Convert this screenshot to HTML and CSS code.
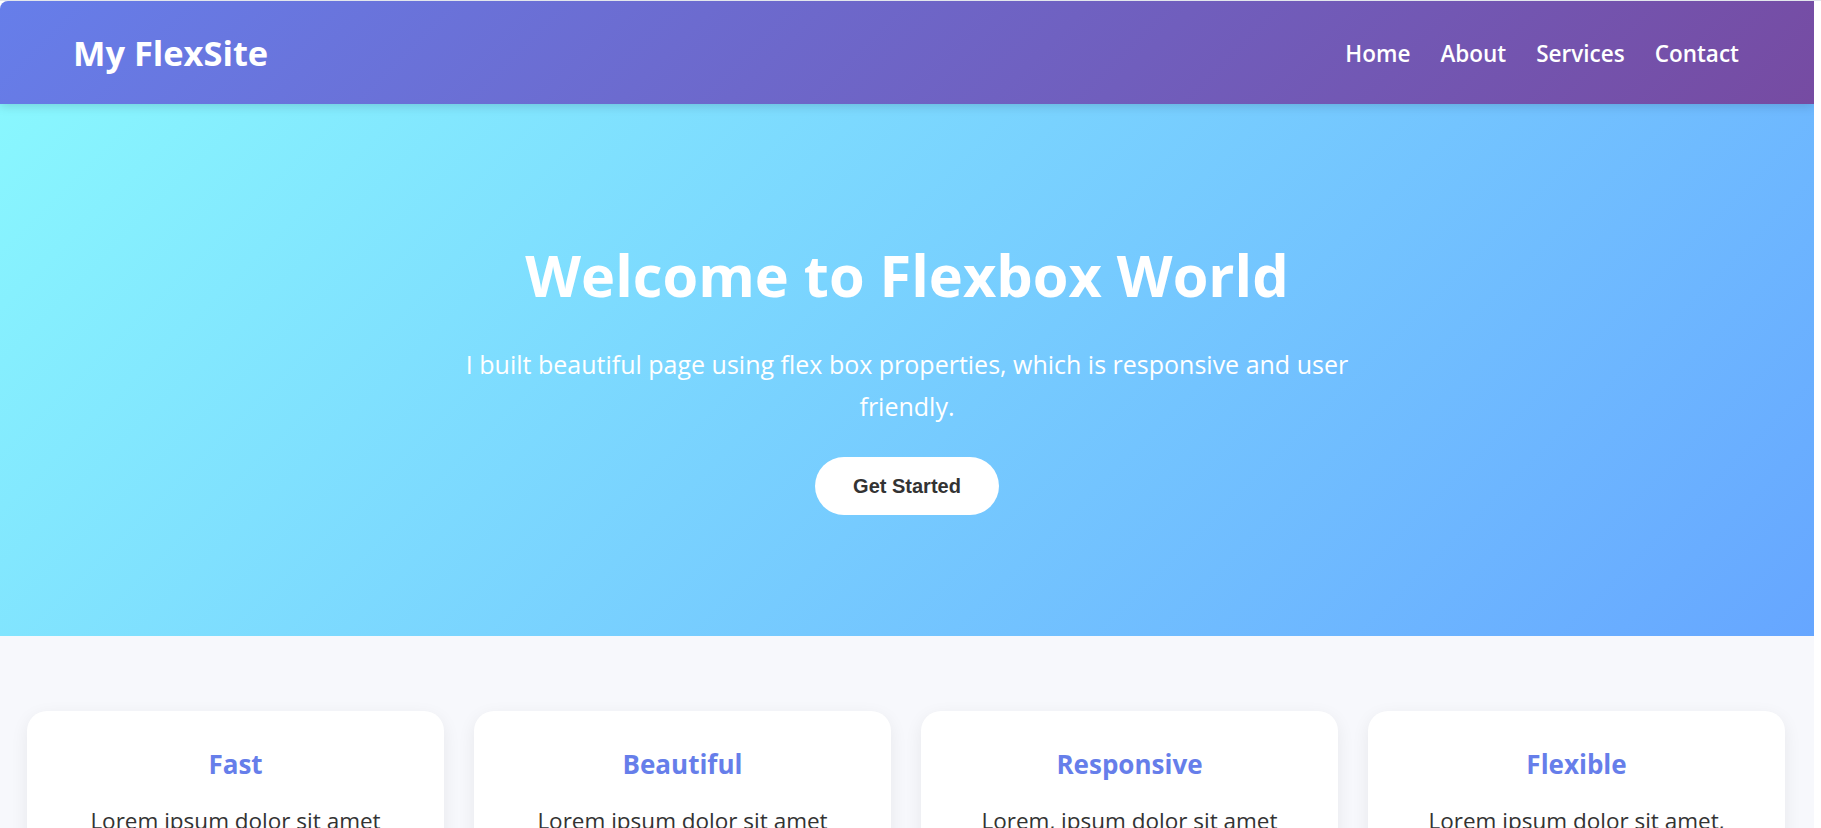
FILE: index.html
```html
<!DOCTYPE html>
<html lang="en">
<head>
<meta charset="utf-8">
<title>My FlexSite</title>
<link rel="stylesheet" href="styles.css">
</head>
<body>
<div class="page">
  <header class="site-header">
    <div class="logo">My FlexSite</div>
    <nav class="nav">
      <a href="#">Home</a>
      <a href="#">About</a>
      <a href="#">Services</a>
      <a href="#">Contact</a>
    </nav>
  </header>
  <section class="hero">
    <h1 class="hero-title">Welcome to Flexbox World</h1>
    <p class="hero-text">I built beautiful page using flex box properties, which is responsive and user friendly.</p>
    <button class="hero-btn">Get Started</button>
  </section>
  <section class="features">
    <div class="card">
      <h3 class="card-title">Fast</h3>
      <p class="card-text">Lorem ipsum dolor sit amet consectetur adipisicing elit.</p>
    </div>
    <div class="card">
      <h3 class="card-title">Beautiful</h3>
      <p class="card-text">Lorem ipsum dolor sit amet consectetur adipisicing elit.</p>
    </div>
    <div class="card">
      <h3 class="card-title">Responsive</h3>
      <p class="card-text">Lorem, ipsum dolor sit amet consectetur adipisicing elit.</p>
    </div>
    <div class="card">
      <h3 class="card-title">Flexible</h3>
      <p class="card-text">Lorem ipsum dolor sit amet, consectetur adipisicing elit.</p>
    </div>
  </section>
</div>
</body>
</html>
```
FILE: styles.css
```css
* { box-sizing: border-box; }
html, body { margin: 0; padding: 0; }
body {
  background: #ffffff;
  border-top: 1px solid #e2e6ec;
  font-family: "Open Sans", "Noto Sans", sans-serif;
  overflow: hidden;
  height: 828px;
}
.page {
  margin-right: 7px;
  border-top-left-radius: 8px;
  overflow: hidden;
  background: #f7f8fc;
  min-height: 827px;
}
.site-header {
  position: relative;
  z-index: 2;
  height: 103px;
  display: flex;
  align-items: center;
  justify-content: space-between;
  padding: 0 75px 0 73px;
  background: linear-gradient(135deg, #667eea 0%, #764ba2 100%);
  box-shadow: 0 2px 10px rgba(0, 0, 0, 0.15);
}
.logo {
  color: #fff;
  font-weight: 700;
  font-size: 34.4px;
  line-height: 1;
  padding-top: 2px;
}
.nav {
  display: flex;
  gap: 30px;
  padding-top: 4px;
}
.nav a {
  color: #fff;
  text-decoration: none;
  font-weight: 600;
  font-size: 22.5px;
  line-height: 1;
}
.hero {
  background: linear-gradient(135deg, #89f7fe 0%, #66a6ff 100%);
  height: 532px;
  display: flex;
  flex-direction: column;
  align-items: center;
  padding-top: 135px;
  text-align: center;
  color: #fff;
}
.hero-title {
  margin: 0;
  font-size: 57.7px;
  line-height: 72px;
  font-weight: 700;
}
.hero-text {
  margin: 32px 0 0;
  max-width: 900px;
  font-size: 25px;
  line-height: 42px;
}
.hero-btn {
  margin-top: 30px;
  height: 58px;
  padding: 0 38px;
  border: none;
  border-radius: 30px;
  background: #fff;
  color: #333;
  font-family: "Liberation Sans", Arial, sans-serif;
  font-weight: 700;
  font-size: 20px;
}
.features {
  display: flex;
  gap: 30px;
  padding: 75px 29px 0 27px;
}
.card {
  flex: 1;
  background: #fff;
  border-radius: 20px;
  padding: 38px 30px 30px;
  text-align: center;
  box-shadow: 0 5px 18px rgba(0, 0, 0, 0.07);
  height: 300px;
}
.card-title {
  margin: 0;
  color: #667eea;
  font-size: 26px;
  line-height: 31px;
  font-weight: 700;
}
.card-text {
  margin: 23px 0 0;
  color: #333;
  font-size: 22.5px;
  line-height: 36px;
}
```
